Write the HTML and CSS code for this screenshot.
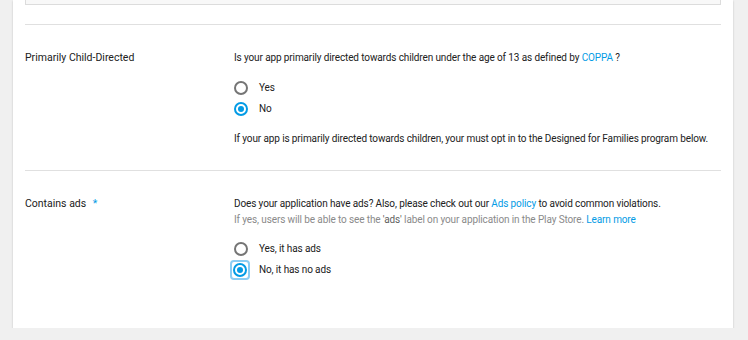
FILE: index.html
```html
<!DOCTYPE html>
<html lang="en">
<head>
    <meta charset="UTF-8">
    <meta name="viewport" content="width=device-width, initial-scale=1.0">
    <title>Content rating</title>
    <link rel="stylesheet" href="styles.css">
</head>
<body>
    <div class="card">
        <div class="prev-box"></div>

        <div class="section">
            <div class="label">Primarily Child-Directed</div>
            <div class="content">
                <p class="question">Is your app primarily directed towards children under the age of 13 as defined by <a href="#">COPPA</a> ?</p>
                <div class="options">
                    <label class="option"><span class="radio"></span>Yes</label>
                    <label class="option"><span class="radio checked"></span>No</label>
                </div>
                <p class="note">If your app is primarily directed towards children, your must opt in to the Designed for Families program below.</p>
            </div>
        </div>

        <div class="section">
            <div class="label">Contains ads <span class="required">*</span></div>
            <div class="content">
                <p class="question">Does your application have ads? Also, please check out our <a href="#">Ads policy</a> to avoid common violations.</p>
                <p class="hint">If yes, users will be able to see the <b>'ads'</b> label on your application in the Play Store. <a href="#">Learn more</a></p>
                <div class="options ads-options">
                    <label class="option"><span class="radio"></span>Yes, it has ads</label>
                    <label class="option"><span class="focus-ring"><span class="radio checked"></span></span>No, it has no ads</label>
                </div>
            </div>
        </div>
    </div>
</body>
</html>
```

FILE: styles.css
```css
body {
    font-family: Roboto, "Liberation Sans", sans-serif;
    margin: 0;
    padding: 0;
    background-color: #f0f0f0;
    color: #212121;
}

.card {
    width: 720px;
    margin-left: 13px;
    height: 328px;
    box-sizing: border-box;
    padding: 0 12px;
    background-color: #fff;
    box-shadow: 0 1px 2px rgba(0, 0, 0, 0.2);
}

.prev-box {
    height: 4px;
    border: 1px solid #dcdcdc;
    border-top: none;
    background-color: #f8f8f8;
    margin-bottom: 19px;
}

.section {
    display: flex;
    border-top: 1px solid #e0e0e0;
    padding-top: 25px;
    padding-bottom: 23px;
}

.label {
    width: 209px;
    flex-shrink: 0;
    font-size: 10.5px;
    line-height: 16px;
}

.required {
    color: #039be5;
    margin-left: 4px;
}

.content {
    font-size: 10px;
    letter-spacing: -0.12px;
    line-height: 16px;
}

.question, .note, .hint {
    margin: 0;
}

.hint {
    color: #8a8a8a;
}

.hint b {
    color: #616161;
    font-weight: normal;
}

a {
    color: #039be5;
    text-decoration: none;
}

.options {
    display: flex;
    flex-direction: column;
    gap: 5px;
    margin: 14px 0 14px;
}

.ads-options {
    margin-top: 13px;
}

.option {
    display: flex;
    align-items: center;
    height: 16px;
}

.radio {
    width: 14px;
    height: 14px;
    box-sizing: border-box;
    border: 2px solid #757575;
    border-radius: 50%;
    margin-right: 11px;
    position: relative;
    flex-shrink: 0;
}

.radio.checked {
    border-color: #039be5;
}

.radio.checked::after {
    content: "";
    position: absolute;
    left: 2px;
    top: 2px;
    width: 6px;
    height: 6px;
    border-radius: 50%;
    background-color: #039be5;
}

.focus-ring {
    display: flex;
    margin: -4px 9px -4px -4px;
    padding: 1px;
    border: 2px solid #8ccdf3;
    border-radius: 4px;
}

.focus-ring .radio {
    margin-right: 0;
}
```
